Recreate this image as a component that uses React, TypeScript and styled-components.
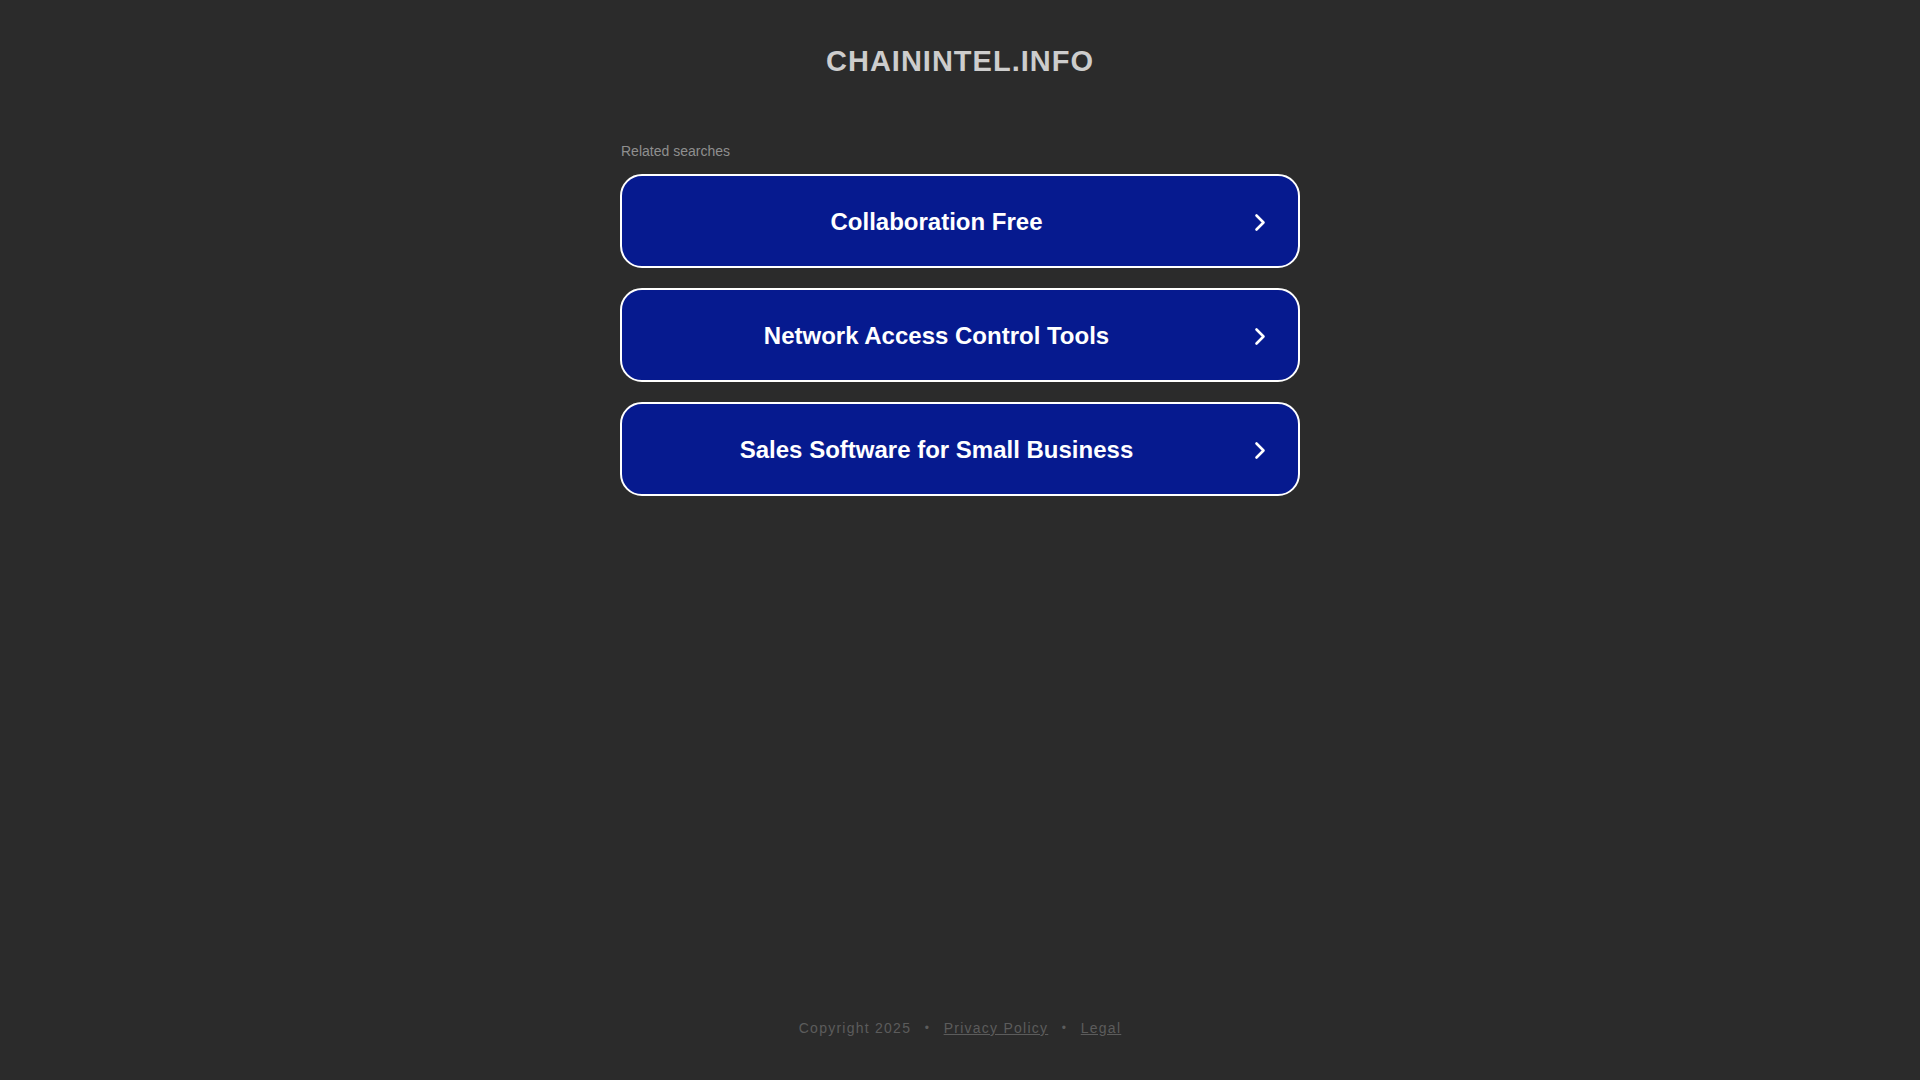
import styled, { createGlobalStyle } from "styled-components";

const GlobalStyle = createGlobalStyle`
    html, body {
        margin: 0;
        padding: 0;
        background-color: #2b2b2b;
        font-family: "Liberation Sans", Arial, sans-serif;
    }
`;

const searches = ["Collaboration Free", "Network Access Control Tools", "Sales Software for Small Business"];

export default function App() {
    return (
        <>
            <GlobalStyle />
            <Page>
                <Header>
                    <Title>CHAININTEL.INFO</Title>
                </Header>
                <Main>
                    <Caption>Related searches</Caption>
                    <List>
                        {searches.map((s) => (
                            <SearchLink key={s} href="#">
                                <Label>{s}</Label>
                                <Arrow>
                                    <svg width="12" height="19" viewBox="0 0 12 19" fill="none">
                                        <polyline
                                            points="2.5,2.5 9.5,9.5 2.5,16.5"
                                            stroke="#ffffff"
                                            strokeWidth="2.6"
                                            strokeLinecap="round"
                                            strokeLinejoin="round"
                                        />
                                    </svg>
                                </Arrow>
                            </SearchLink>
                        ))}
                    </List>
                </Main>
                <Footer>
                    <span>Copyright 2025</span>
                    <Dot>•</Dot>
                    <FooterLink href="#">Privacy Policy</FooterLink>
                    <Dot>•</Dot>
                    <FooterLink href="#">Legal</FooterLink>
                </Footer>
            </Page>
        </>
    );
}

const Page = styled.div`
    min-height: 100vh;
    display: flex;
    flex-direction: column;
    align-items: center;
`;

const Header = styled.header`
    padding-top: 43px;
`;

const Title = styled.h1`
    margin: 0;
    font-size: 29px;
    line-height: 36px;
    font-weight: 700;
    letter-spacing: 1px;
    color: #cdcdcd;
`;

const Main = styled.main`
    width: 680px;
    padding-top: 64px;
`;

const Caption = styled.div`
    font-size: 14px;
    line-height: 16px;
    color: #8f8f8f;
    padding-left: 1px;
    margin-bottom: 15px;
`;

const List = styled.div`
    display: flex;
    flex-direction: column;
    gap: 20px;
`;

const SearchLink = styled.a`
    box-sizing: border-box;
    height: 94px;
    display: grid;
    grid-template-columns: 1fr 28px;
    align-items: center;
    padding: 2px 24px 0 5px;
    border: 2px solid #ffffff;
    border-radius: 22px;
    background-color: #061a8f;
    color: #ffffff;
    text-decoration: none;
`;

const Label = styled.span`
    text-align: center;
    font-size: 24px;
    font-weight: 700;
`;

const Arrow = styled.span`
    display: flex;
    justify-content: center;
    align-items: center;
`;

const Footer = styled.footer`
    margin-top: auto;
    padding-bottom: 44px;
    display: flex;
    align-items: center;
    font-size: 14px;
    letter-spacing: 1.25px;
    color: #5c5c5c;
`;

const Dot = styled.span`
    margin: 0 13.5px;
    font-size: 12px;
`;

const FooterLink = styled.a`
    color: #5c5c5c;
    text-decoration: underline;
`;
